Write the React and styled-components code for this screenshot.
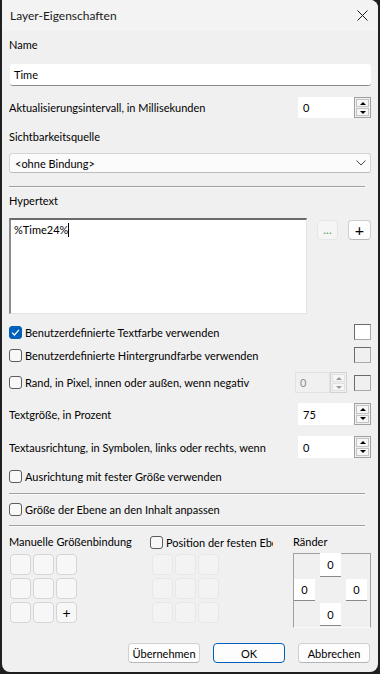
import React from "react";
import styled, { createGlobalStyle } from "styled-components";

const GlobalStyle = createGlobalStyle`
  html, body {
    margin: 0;
    padding: 0;
    background: #1f1f1f;
  }
  body {
    font-family: Lato, "Noto Sans", sans-serif;
    font-size: 11px;
    color: #000;
  }
  * { box-sizing: border-box; }
`;

const Window = styled.div`
  margin-left: 2px;
  width: 376px;
  height: 672px;
  background: #f0f0f0;
  border-radius: 0 8px 8px 8px;
  overflow: hidden;
  display: flex;
  flex-direction: column;
`;

const TitleBar = styled.div`
  height: 31px;
  flex: none;
  background: #f3f3f3;
  display: flex;
  align-items: center;
  justify-content: space-between;
  padding: 0 10px 0 8px;
  color: #1a1a1a;
  font-size: 12px;
`;

const Body = styled.div`
  display: flex;
  flex-direction: column;
  padding: 0 7px;
`;

const Label = styled.div`
  margin-top: ${(p) => p.$mt || 0}px;
  height: 16px;
  line-height: 16px;
  white-space: nowrap;
`;

const Row = styled.div`
  margin-top: ${(p) => p.$mt || 0}px;
  height: ${(p) => p.$h}px;
  display: flex;
  align-items: ${(p) => p.$align || "center"};
  gap: ${(p) => p.$gap || 0}px;
`;

const RowText = styled.div`
  flex: 1;
  min-width: 0;
  overflow: hidden;
  white-space: nowrap;
`;

const TextInput = styled.div`
  margin-top: ${(p) => p.$mt || 0}px;
  margin-left: 1px;
  height: 22px;
  background: #fff;
  border-radius: 3px;
  border-bottom: 1px solid #8a8a8a;
  padding-left: 4px;
  line-height: 21px;
`;

const Combo = styled.div`
  margin-top: ${(p) => p.$mt || 0}px;
  height: 20px;
  background: #fbfbfb;
  border: 1px solid #d4d4d4;
  border-bottom-color: #bdbdbd;
  border-radius: 3px;
  display: flex;
  align-items: center;
  justify-content: space-between;
  padding: 0 4px 0 5px;
`;

const Separator = styled.div`
  margin-top: ${(p) => p.$mt || 0}px;
  margin-right: 6px;
  height: 2px;
  border-top: 1px solid #a0a0a0;
  border-bottom: 1px solid #fbfbfb;
`;

const SpinWrap = styled.div`
  display: flex;
  height: 100%;
  width: ${(p) => p.$w}px;
  flex: none;
`;

const SpinField = styled.div`
  flex: 1;
  background: ${(p) => (p.$disabled ? "#f0f0f0" : "#fff")};
  border: 1px solid ${(p) => (p.$disabled ? "#e2e2e2" : "#fff")};
  color: ${(p) => (p.$disabled ? "#8c8c8c" : "#000")};
  padding-left: 4px;
  display: flex;
  align-items: center;
`;

const SpinButtons = styled.div`
  width: 17px;
  display: flex;
  flex-direction: column;
  border: 1px solid ${(p) => (p.$disabled ? "#d2d2d2" : "#a0a0a0")};
  background: #f0f0f0;
  padding: 1px;
  gap: 1px;
`;

const SpinBtn = styled.div`
  flex: 1;
  display: flex;
  align-items: center;
  justify-content: center;
  background: #f6f6f6;
  border: 1px solid ${(p) => (p.$disabled ? "#e0e0e0" : "#c4c4c4")};
  &::after {
    content: "";
    border-left: 3px solid transparent;
    border-right: 3px solid transparent;
    ${(p) => (p.$down ? "border-top" : "border-bottom")}: 3px solid
      ${(p) => (p.$disabled ? "#9a9a9a" : "#000")};
  }
`;

const ColorBox = styled.div`
  width: 17px;
  height: 16px;
  flex: none;
  background: ${(p) => (p.$white ? "#fff" : "#f0f0f0")};
  border: 1px solid;
  border-color: #6b6b6b #a9a9a9 #a9a9a9 #6b6b6b;
`;

const Check = styled.span`
  width: 13px;
  height: 13px;
  flex: none;
  border-radius: 3px;
  border: 1px solid ${(p) => (p.$checked ? "#005fb8" : "#5c5c5c")};
  background: ${(p) => (p.$checked ? "#005fb8" : "#f8f8f8")};
  display: inline-flex;
  align-items: center;
  justify-content: center;
  margin-right: 3px;
`;

const CheckLabel = styled.div`
  display: flex;
  align-items: center;
  flex: 1;
  min-width: 0;
  white-space: nowrap;
  overflow: hidden;
`;

const TextArea = styled.div`
  width: 299px;
  height: 96px;
  background: #fff;
  border-style: solid;
  border-width: 2px 1px 1px 2px;
  border-color: #6a6a6a #e3e3e3 #e3e3e3 #8a8a8a;
  padding: 1px 3px;
  line-height: 17px;
`;

const Caret = styled.span`
  display: inline-block;
  width: 1px;
  height: 14px;
  background: #000;
  vertical-align: -3px;
`;

const SmallButtons = styled.div`
  display: flex;
  gap: 10px;
  margin: 2px 0 0 10px;
`;

const SmallButton = styled.div`
  width: ${(p) => p.$w}px;
  height: 20px;
  border-radius: 4px;
  background: ${(p) => (p.$disabled ? "#f5f5f5" : "#fdfdfd")};
  border: 1px solid ${(p) => (p.$disabled ? "#e6e6e6" : "#cfcfcf")};
  border-bottom-color: ${(p) => (p.$disabled ? "#e6e6e6" : "#b9b9b9")};
  color: ${(p) => (p.$disabled ? "#5f9a5f" : "#000")};
  display: flex;
  align-items: center;
  justify-content: center;
  font-size: ${(p) => (p.$big ? 16 : 12)}px;
  line-height: 1;
`;

const Bottom = styled.div`
  margin-top: 7px;
  display: flex;
  height: 94px;
`;

const Column = styled.div`
  width: ${(p) => p.$w}px;
  flex: none;
  display: flex;
  flex-direction: column;
`;

const ClipText = styled.div`
  width: ${(p) => p.$w}px;
  overflow: hidden;
  white-space: nowrap;
`;

const CellGrid = styled.div`
  margin-top: ${(p) => p.$mt || 0}px;
  margin-left: ${(p) => p.$ml || 0}px;
  display: grid;
  grid-template-columns: repeat(3, 21px);
  grid-auto-rows: 21px;
  column-gap: 2px;
  row-gap: 3px;
`;

const Cell = styled.div`
  border-radius: 4px;
  background: ${(p) => (p.$disabled ? "#f3f3f3" : "#f7f7f7")};
  border: 1px solid ${(p) => (p.$disabled ? "#e7e7e7" : "#d5d5d5")};
  display: flex;
  align-items: center;
  justify-content: center;
  font-size: 14px;
`;

const MarginBox = styled.div`
  margin-top: 3px;
  width: 78px;
  height: 75px;
  border: 1px solid #a0a0a0;
  border-bottom-color: #fafafa;
  display: grid;
  grid-template-columns: repeat(3, 21px);
  grid-template-rows: 23px 22px 23px;
  column-gap: 5px;
  row-gap: 2px;
`;

const MarginField = styled.div`
  grid-column: ${(p) => p.$col};
  grid-row: ${(p) => p.$row};
  margin-top: ${(p) => (p.$row === 1 ? -1 : 0)}px;
  background: #fff;
  border-bottom: 1px solid #8a8a8a;
  display: flex;
  align-items: center;
  justify-content: center;
`;

const ButtonRow = styled.div`
  margin-top: 15px;
  display: flex;
  justify-content: flex-end;
  gap: 13px;
  padding-right: 1px;
`;

const DialogButton = styled.div`
  width: 72px;
  height: 20px;
  border-radius: 4px;
  background: #fdfdfd;
  border: 1px solid ${(p) => (p.$primary ? "#005fb8" : "#d0d0d0")};
  border-bottom-color: ${(p) => (p.$primary ? "#005fb8" : "#b5b5b5")};
  display: flex;
  align-items: center;
  justify-content: center;
`;

function Spin({ value, width = 73, disabled }) {
  return (
    <SpinWrap $w={width}>
      <SpinField $disabled={disabled}>{value}</SpinField>
      <SpinButtons $disabled={disabled}>
        <SpinBtn $disabled={disabled} />
        <SpinBtn $disabled={disabled} $down />
      </SpinButtons>
    </SpinWrap>
  );
}

function CheckBox({ checked, children }) {
  return (
    <CheckLabel>
      <Check $checked={checked}>
        {checked && (
          <svg width="9" height="9" viewBox="0 0 9 9">
            <path d="M1 4.6 L3.4 7 L8 1.8" fill="none" stroke="#fff" strokeWidth="1.2" />
          </svg>
        )}
      </Check>
      {children}
    </CheckLabel>
  );
}

export default function App() {
  return (
    <>
      <GlobalStyle />
      <Window>
        <TitleBar>
          <span>Layer-Eigenschaften</span>
          <svg width="11" height="11" viewBox="0 0 11 11">
            <path d="M0.5 0.5 L10.5 10.5 M10.5 0.5 L0.5 10.5" stroke="#1a1a1a" strokeWidth="1" />
          </svg>
        </TitleBar>
        <Body>
          <Label $mt={6}>Name</Label>
          <TextInput $mt={11}>Time</TextInput>

          <Row $mt={11} $h={21}>
            <RowText>Aktualisierungsintervall, in Millisekunden</RowText>
            <Spin value="0" />
          </Row>

          <Label $mt={11}>Sichtbarkeitsquelle</Label>
          <Combo $mt={8}>
            <span>&lt;ohne Bindung&gt;</span>
            <svg width="10" height="6" viewBox="0 0 10 6">
              <path d="M0.5 0.5 L5 5 L9.5 0.5" fill="none" stroke="#444" strokeWidth="1" />
            </svg>
          </Combo>

          <Separator $mt={13} />
          <Label $mt={5}>Hypertext</Label>
          <Row $mt={9} $h={96} $align="flex-start">
            <TextArea>
              %Time24%<Caret />
            </TextArea>
            <SmallButtons>
              <SmallButton $w={21} $disabled>
                ...
              </SmallButton>
              <SmallButton $w={23} $big>
                +
              </SmallButton>
            </SmallButtons>
          </Row>

          <Row $mt={10} $h={16}>
            <CheckBox checked>Benutzerdefinierte Textfarbe verwenden</CheckBox>
            <ColorBox $white />
          </Row>
          <Row $mt={7} $h={16}>
            <CheckBox>Benutzerdefinierte Hintergrundfarbe verwenden</CheckBox>
            <ColorBox />
          </Row>
          <Row $mt={9} $h={21} $gap={7}>
            <CheckBox>Rand, in Pixel, innen oder außen, wenn negativ</CheckBox>
            <Spin value="0" width={52} disabled />
            <ColorBox />
          </Row>
          <Row $mt={10} $h={22}>
            <RowText>Textgröße, in Prozent</RowText>
            <Spin value="75" />
          </Row>
          <Row $mt={11} $h={22}>
            <RowText>Textausrichtung, in Symbolen, links oder rechts, wenn</RowText>
            <Spin value="0" />
          </Row>
          <Row $mt={10} $h={16}>
            <CheckBox>Ausrichtung mit fester Größe verwenden</CheckBox>
          </Row>

          <Separator $mt={9} />
          <Row $mt={6} $h={16}>
            <CheckBox>Größe der Ebene an den Inhalt anpassen</CheckBox>
          </Row>
          <Separator $mt={8} />

          <Bottom>
            <Column $w={141}>
              <Label>Manuelle Größenbindung</Label>
              <CellGrid $mt={4} $ml={1}>
                {Array.from({ length: 9 }, (_, i) => (
                  <Cell key={i}>{i === 8 ? "+" : ""}</Cell>
                ))}
              </CellGrid>
            </Column>
            <Column $w={143}>
              <Row $h={16}>
                <Check />
                <ClipText $w={107}>Position der festen Ebene</ClipText>
              </Row>
              <CellGrid $mt={4} $ml={2}>
                {Array.from({ length: 9 }, (_, i) => (
                  <Cell key={i} $disabled />
                ))}
              </CellGrid>
            </Column>
            <Column $w={78}>
              <Label>Ränder</Label>
              <MarginBox>
                <MarginField $col={2} $row={1}>0</MarginField>
                <MarginField $col={1} $row={2}>0</MarginField>
                <MarginField $col={3} $row={2}>0</MarginField>
                <MarginField $col={2} $row={3}>0</MarginField>
              </MarginBox>
            </Column>
          </Bottom>

          <ButtonRow>
            <DialogButton>Übernehmen</DialogButton>
            <DialogButton $primary>OK</DialogButton>
            <DialogButton>Abbrechen</DialogButton>
          </ButtonRow>
        </Body>
      </Window>
    </>
  );
}
